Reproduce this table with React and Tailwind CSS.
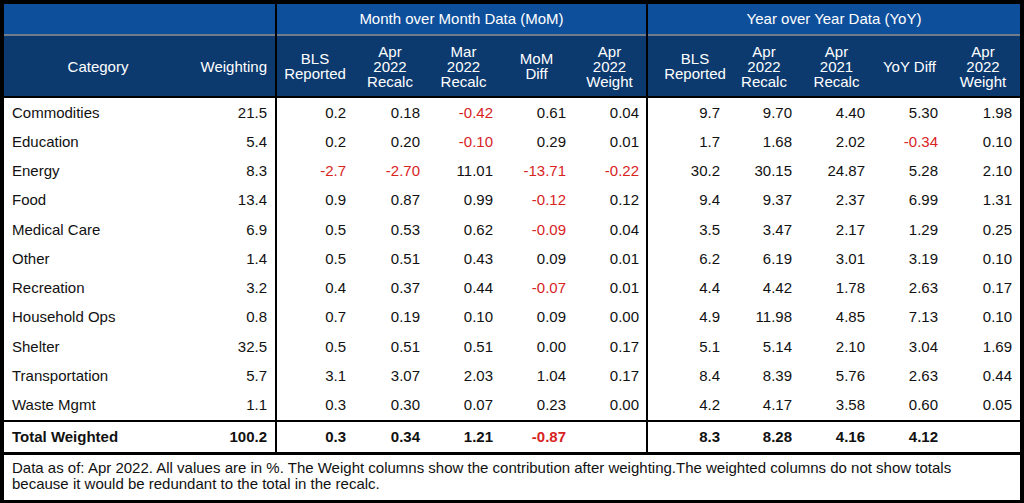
import React from 'react'

const ROWS = [
  ['Commodities', '21.5', ['0.2', '0.18', '-0.42', '0.61', '0.04'], ['9.7', '9.70', '4.40', '5.30', '1.98']],
  ['Education', '5.4', ['0.2', '0.20', '-0.10', '0.29', '0.01'], ['1.7', '1.68', '2.02', '-0.34', '0.10']],
  ['Energy', '8.3', ['-2.7', '-2.70', '11.01', '-13.71', '-0.22'], ['30.2', '30.15', '24.87', '5.28', '2.10']],
  ['Food', '13.4', ['0.9', '0.87', '0.99', '-0.12', '0.12'], ['9.4', '9.37', '2.37', '6.99', '1.31']],
  ['Medical Care', '6.9', ['0.5', '0.53', '0.62', '-0.09', '0.04'], ['3.5', '3.47', '2.17', '1.29', '0.25']],
  ['Other', '1.4', ['0.5', '0.51', '0.43', '0.09', '0.01'], ['6.2', '6.19', '3.01', '3.19', '0.10']],
  ['Recreation', '3.2', ['0.4', '0.37', '0.44', '-0.07', '0.01'], ['4.4', '4.42', '1.78', '2.63', '0.17']],
  ['Household Ops', '0.8', ['0.7', '0.19', '0.10', '0.09', '0.00'], ['4.9', '11.98', '4.85', '7.13', '0.10']],
  ['Shelter', '32.5', ['0.5', '0.51', '0.51', '0.00', '0.17'], ['5.1', '5.14', '2.10', '3.04', '1.69']],
  ['Transportation', '5.7', ['3.1', '3.07', '2.03', '1.04', '0.17'], ['8.4', '8.39', '5.76', '2.63', '0.44']],
  ['Waste Mgmt', '1.1', ['0.3', '0.30', '0.07', '0.23', '0.00'], ['4.2', '4.17', '3.58', '0.60', '0.05']],
]

const TOTAL = ['Total Weighted', '100.2', ['0.3', '0.34', '1.21', '-0.87', ''], ['8.3', '8.28', '4.16', '4.12', '']]

// widths tuned so headers/values sit where the screenshot has them
const MOM_COLS = [
  { w: 'w-[76px]', hdr: '', label: 'BLS\nReported' },
  { w: 'w-[74px]', hdr: '', label: 'Apr\n2022\nRecalc' },
  { w: 'w-[73px]', hdr: '', label: 'Mar\n2022\nRecalc' },
  { w: 'w-[73px]', hdr: '', label: 'MoM\nDiff' },
  { w: 'w-[73px]', hdr: '', label: 'Apr\n2022\nWeight' },
]

const YOY_COLS = [
  { w: 'w-[80px]', hdr: 'pl-[14px]', label: 'BLS\nReported' },
  { w: 'w-[72px]', hdr: '', label: 'Apr\n2022\nRecalc' },
  { w: 'w-[73px]', hdr: '', label: 'Apr\n2021\nRecalc' },
  { w: 'w-[73px]', hdr: '', label: 'YoY Diff' },
  { w: 'w-[74px]', hdr: '', label: 'Apr\n2022\nWeight' },
]

function Num({ v, w, pad }) {
  const neg = v.startsWith('-')
  return (
    <div className={`${w} ${pad} flex items-center justify-end ${neg ? 'text-[#d8231f]' : 'text-[#111]'}`}>
      {v}
    </div>
  )
}

function Row({ row, bold, className }) {
  const [name, weight, mom, yoy] = row
  return (
    <div className={`flex gap-[2px] ${bold ? 'font-bold' : ''} ${className}`}>
      <div className="w-[271px] flex bg-white">
        <div className="w-[188px] pl-[8px] flex items-center text-[#111]">{name}</div>
        <div className="w-[83px] pr-[8px] flex items-center justify-end text-[#111]">{weight}</div>
      </div>
      <div className="w-[369px] flex bg-white">
        {mom.map((v, i) => (
          <Num key={i} v={v} w={MOM_COLS[i].w} pad="pr-[7px]" />
        ))}
      </div>
      <div className="w-[372px] flex bg-white">
        {yoy.map((v, i) => (
          <Num key={i} v={v} w={YOY_COLS[i].w} pad="pr-[8px]" />
        ))}
      </div>
    </div>
  )
}

function HeadCells({ cols }) {
  return cols.map(c => (
    <div key={c.label} className={`${c.w} ${c.hdr} flex items-center justify-center text-center whitespace-pre-line`}>
      {c.label}
    </div>
  ))
}

export default function App() {
  return (
    <div className="w-[1024px] h-[503px] bg-black pt-[4px] px-[4px] font-['Liberation_Sans',Arial,sans-serif] text-[15px] leading-[16px] overflow-hidden">
      {/* group header */}
      <div className="flex gap-[2px] h-[32px]">
        <div className="w-[271px] bg-[#0e4f9c] border-b-2 border-[#727d8b]" />
        <div className="w-[369px] bg-[#0e4f9c] border-b-2 border-[#727d8b] flex items-center justify-center text-white">
          Month over Month Data (MoM)
        </div>
        <div className="w-[372px] bg-[#0e4f9c] border-b-2 border-[#727d8b] flex items-center justify-center text-white">
          Year over Year Data (YoY)
        </div>
      </div>

      {/* column header */}
      <div className="flex gap-[2px] h-[60px] text-white leading-[15px]">
        <div className="w-[271px] flex bg-[#0c3a6f]">
          <div className="w-[188px] flex items-center justify-center">Category</div>
          <div className="w-[83px] pr-[8px] flex items-center justify-end">Weighting</div>
        </div>
        <div className="w-[369px] flex bg-[#0c3a6f]">
          <HeadCells cols={MOM_COLS} />
        </div>
        <div className="w-[372px] flex bg-[#0c3a6f]">
          <HeadCells cols={YOY_COLS} />
        </div>
      </div>

      {/* body */}
      <div className="mt-[2px] h-[322px] flex flex-col">
        {ROWS.map(r => (
          <Row key={r[0]} row={r} className="flex-1" />
        ))}
      </div>

      {/* total */}
      <Row row={TOTAL} bold className="mt-[2px] h-[30px]" />

      {/* note */}
      <div className="mt-[3px] h-[45px] bg-white px-[8px] pt-[5px] text-[#111]">
        Data as of: Apr 2022. All values are in %. The Weight columns show the contribution after weighting.The weighted columns do not show totals because it would be redundant to the total in the recalc.
      </div>
    </div>
  )
}
